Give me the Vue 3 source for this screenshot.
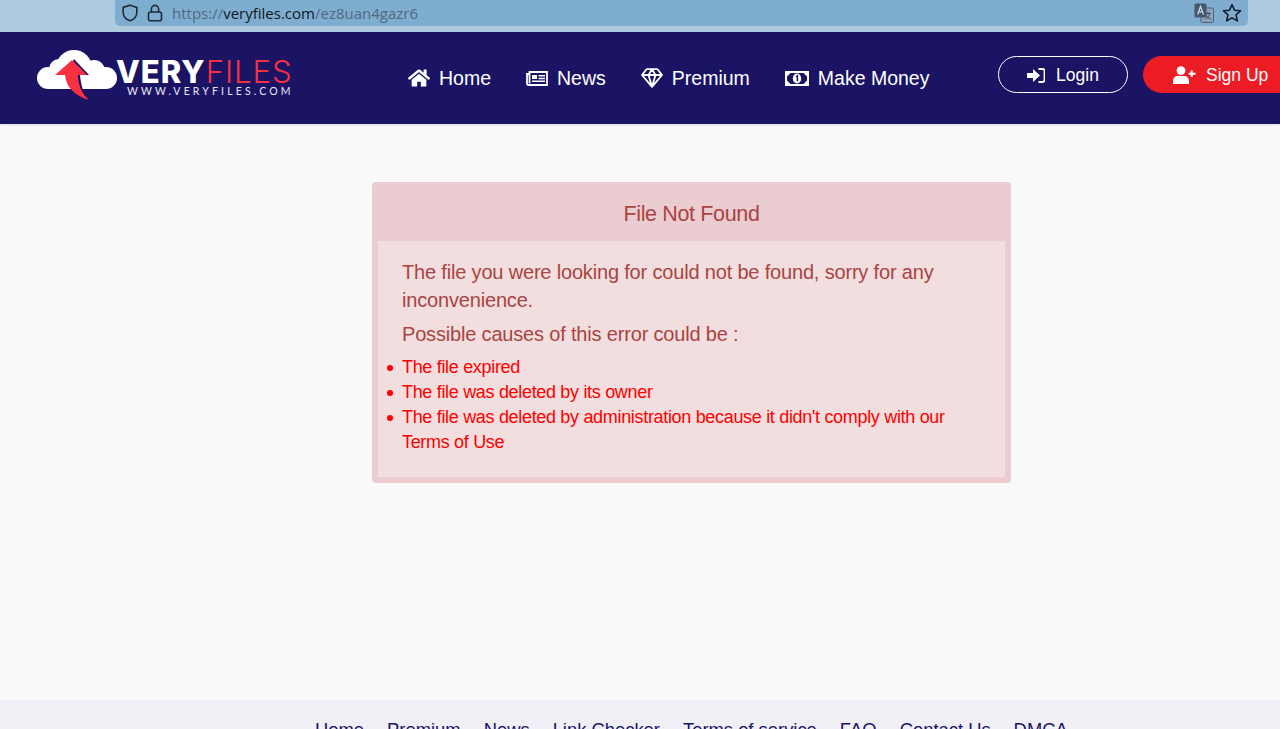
<script setup>
const causes = [
  'The file expired',
  'The file was deleted by its owner',
  "The file was deleted by administration because it didn't comply with our Terms of Use",
]
const footerLinks = ['Home', 'Premium', 'News', 'Link Checker', 'Terms of service', 'FAQ', 'Contact Us', 'DMCA']
</script>

<template>
  <div class="page">
    <div class="browser">
      <div class="urlbar">
        <svg class="shield" viewBox="0 0 16 18" width="16" height="18" fill="none" stroke="#1d2a38" stroke-width="1.6">
          <path d="M8 1.2 14.8 3.4V8.5C14.8 12.6 12 15.4 8 16.8 4 15.4 1.2 12.6 1.2 8.5V3.4Z" />
        </svg>
        <svg class="lock" viewBox="0 0 16 18" width="16" height="18" fill="none" stroke="#1d2a38" stroke-width="1.6">
          <path d="M4.4 8V5a3.6 3.6 0 0 1 7.2 0v3" />
          <rect x="1.5" y="8" width="13" height="8.8" rx="2" />
        </svg>
        <div class="url"><span class="dim">https://</span>veryfiles.com<span class="dim">/ez8uan4gazr6</span></div>
        <svg class="translate" viewBox="0 0 20 20" width="20" height="20">
          <rect x="7" y="5" width="12.5" height="14.5" rx="1.5" fill="#8ba3b8" stroke="#4d6275" />
          <rect x="0.5" y="0.5" width="12" height="14" rx="1.5" fill="#46586b" />
          <path d="M3.6 11.5 6.5 3.5 9.4 11.5M4.7 8.8H8.3" fill="none" stroke="#c8d8e6" stroke-width="1.3" />
          <path d="M11 10.5H17M14 9V10.5M15.8 10.5C15.2 13 13.6 15 11.5 16M12.5 12.5C13.4 14.2 15 15.6 17 16.2" fill="none" stroke="#3c4d5e" stroke-width="1" />
        </svg>
        <svg class="star" viewBox="0 0 20 20" width="20" height="20" fill="none" stroke="#10181f" stroke-width="1.5" stroke-linejoin="round">
          <path d="M10 1.6 12.5 7.2 18.6 7.8 14 11.9 15.4 17.9 10 14.8 4.6 17.9 6 11.9 1.4 7.8 7.5 7.2Z" />
        </svg>
      </div>
    </div>

    <header class="header">
      <div class="logo">
        <svg class="logo-mark" viewBox="0 0 84 52" width="84" height="52">
          <g fill="#fff">
            <circle cx="12" cy="28" r="11" />
            <circle cx="23" cy="19" r="10" />
            <circle cx="38" cy="18" r="18" />
            <circle cx="58" cy="21" r="11" />
            <circle cx="70" cy="28" r="11" />
            <rect x="12" y="24" width="58" height="15" />
          </g>
          <path d="M38 9 53 25H44C45 35 47 44 54 50 41 46 33 37 32 25Z" fill="#1a1464" />
          <path d="M36 10 51 25H42C42 35 46 44 53 50 39 46 30 37 29 25H19Z" fill="#f9303f" />
        </svg>
        <div class="logo-text">
          <div class="logo-name"><b>VERY</b><span>FILES</span></div>
          <div class="logo-site">WWW.VERYFILES.COM</div>
        </div>
      </div>

      <nav class="nav">
        <a class="nav-item">
          <svg viewBox="0 0 576 512" width="22" height="20" fill="#fff">
            <path d="M280.37 148.26L96 300.11V464a16 16 0 0 0 16 16l112.06-.29a16 16 0 0 0 15.92-16V368a16 16 0 0 1 16-16h64a16 16 0 0 1 16 16v95.64a16 16 0 0 0 16 16.05L464 480a16 16 0 0 0 16-16V300L295.67 148.26a12.19 12.19 0 0 0-15.3 0zM571.6 251.47L488 182.56V44.05a12 12 0 0 0-12-12h-56a12 12 0 0 0-12 12v72.61L318.47 43a48 48 0 0 0-61 0L4.34 251.47a12 12 0 0 0-1.6 16.9l25.5 31A12 12 0 0 0 45.15 301l235.22-193.74a12.19 12.19 0 0 1 15.3 0L530.9 301a12 12 0 0 0 16.9-1.6l25.5-31a12 12 0 0 0-1.7-16.93z" />
          </svg>
          Home
        </a>
        <a class="nav-item">
          <svg viewBox="0 0 22 15" width="22" height="15">
            <path d="M3.5 1H21V14H2.5A1.5 1.5 0 0 1 1 12.5V3H3.5ZM3.5 3V12.5" fill="none" stroke="#fff" stroke-width="1.8" />
            <path d="M6 4h5v4H6zM12.5 4H19v1.5h-6.5zM12.5 6.7H19v1.5h-6.5zM6 9.6H19v1.5H6z" fill="#fff" />
          </svg>
          News
        </a>
        <a class="nav-item">
          <svg viewBox="0 0 22 20" width="22" height="20" fill="none" stroke="#fff" stroke-width="1.8" stroke-linejoin="round">
            <path d="M5.5 1.2H16.5L21 7 11 18.8 1 7ZM1 7H21M7.5 7 11 18.8 14.5 7 11 1.2 7.5 7" />
          </svg>
          Premium
        </a>
        <a class="nav-item">
          <svg viewBox="0 0 24 15" width="24" height="15">
            <rect x="1" y="1" width="22" height="13" fill="#1a1464" stroke="#fff" stroke-width="2" />
            <path d="M2 2H5.5L2 5.5ZM22 2H18.5L22 5.5ZM2 13H5.5L2 9.5ZM22 13H18.5L22 9.5Z" fill="#fff" />
            <ellipse cx="12" cy="7.5" rx="4.2" ry="5" fill="#fff" />
            <path d="M11 5.6 12.4 4.8V10.2" fill="none" stroke="#1a1464" stroke-width="1.5" />
          </svg>
          Make Money
        </a>
      </nav>

      <div class="auth">
        <a class="btn btn-login">
          <svg viewBox="0 0 18 15" width="18" height="15" fill="#fff">
            <path d="M0 5H6V1L13 7.5 6 14V10H0Z" />
            <path d="M11.5 1H15.5A2 2 0 0 1 17.5 3V12A2 2 0 0 1 15.5 14H11.5" fill="none" stroke="#fff" stroke-width="1.8" />
          </svg>
          Login
        </a>
        <a class="btn btn-signup">
          <svg viewBox="0 0 23 18" width="23" height="18" fill="#fff">
            <circle cx="8" cy="4.6" r="4.4" />
            <path d="M0 18V15C0 12 2 10 5 10H11C14 10 16 12 16 15V18Z" />
            <path d="M18.7 4.5V11M15.5 7.7H22.5" fill="none" stroke="#fff" stroke-width="2" />
          </svg>
          Sign Up
        </a>
      </div>
    </header>

    <main class="content">
      <section class="card">
        <h1 class="card-title">File Not Found</h1>
        <div class="card-body">
          <p>The file you were looking for could not be found, sorry for any inconvenience.</p>
          <p class="causes-intro">Possible causes of this error could be :</p>
          <ul class="causes">
            <li v-for="cause in causes" :key="cause">{{ cause }}</li>
          </ul>
        </div>
      </section>
    </main>

    <footer class="footer">
      <a v-for="link in footerLinks" :key="link">{{ link }}</a>
    </footer>
  </div>
</template>

<style>
html, body {
  height: 729px;
  overflow: hidden;
}
</style>

<style scoped>
.page {
  height: 729px;
  overflow: hidden;
  display: flex;
  flex-direction: column;
  font-family: "Liberation Sans", Arial, sans-serif;
  background: #f9f9f9;
}

.browser {
  height: 32px;
  flex: none;
  padding-left: 115px;
  padding-right: 32px;
  background: #aecbe0;
}
.urlbar {
  height: 26px;
  display: flex;
  align-items: center;
  background: #7fadd0;
  border-radius: 0 0 5px 5px;
  padding: 0 6px 0 7px;
}
.lock {
  margin-left: 9px;
}
.url {
  margin-left: 9px;
  flex: 1;
  font-family: "Open Sans", sans-serif;
  font-size: 15px;
  color: #10181f;
}
.dim {
  color: #4f6a80;
}
.star {
  margin-left: 8px;
}

.header {
  height: 92px;
  flex: none;
  display: flex;
  align-items: center;
  background: #1b1464;
  box-shadow: 0 1px 2px rgba(0, 0, 0, 0.12);
  padding-left: 36px;
  overflow: hidden;
  position: relative;
}
.logo {
  width: 372px;
  flex: none;
  display: flex;
  align-items: flex-start;
  height: 52px;
  margin-bottom: 4px;
}
.logo-text {
  margin-left: -4px;
  margin-top: 8px;
  font-family: Inter, sans-serif;
}
.logo-name {
  font-size: 31px;
  line-height: 28px;
  color: #fff;
  letter-spacing: 1px;
  white-space: nowrap;
}
.logo-name b {
  font-weight: 800;
}
.logo-name span {
  font-weight: 300;
  color: #f9303f;
}
.logo-site {
  margin-left: 11px;
  font-family: Lato, sans-serif;
  font-size: 10.5px;
  line-height: 10px;
  letter-spacing: 3.15px;
  color: #e8e8f2;
  white-space: nowrap;
}

.nav {
  display: flex;
  gap: 35px;
  width: 590px;
  flex: none;
}
.nav-item {
  display: flex;
  align-items: center;
  gap: 9px;
  color: #fff;
  font-size: 19.5px;
  white-space: nowrap;
}

.auth {
  display: flex;
  gap: 15px;
  flex: none;
  margin-bottom: 8px;
}
.btn {
  height: 37px;
  box-sizing: border-box;
  display: flex;
  align-items: center;
  border-radius: 19px;
  color: #fff;
  font-size: 17.5px;
  white-space: nowrap;
  padding-top: 2px;
}
.btn-login {
  width: 130px;
  border: 1px solid #fff;
  justify-content: center;
  gap: 11px;
}
.btn-signup {
  width: 170px;
  background: #ed1c24;
  padding-left: 30px;
  gap: 10px;
}

.content {
  flex: 1;
  min-height: 0;
  padding-top: 58px;
}
.card {
  width: 639px;
  height: 301px;
  box-sizing: border-box;
  margin-left: 372px;
  background: #ebccd1;
  border-radius: 4px;
  padding: 0 6px 6px;
  display: flex;
  flex-direction: column;
  color: #a94442;
}
.card-title {
  margin: 0;
  height: 59px;
  box-sizing: border-box;
  padding-top: 6px;
  flex: none;
  display: flex;
  align-items: center;
  justify-content: center;
  font-size: 21.5px;
  letter-spacing: -0.35px;
  font-weight: 400;
}
.card-body {
  flex: 1;
  background: #f2dede;
  padding: 17px 24px 0;
  font-size: 20px;
  letter-spacing: -0.175px;
  line-height: 28px;
}
.card-body p {
  margin: 0 0 6px;
}
.causes {
  margin: 0;
  padding: 0;
  list-style: none;
  color: #f00;
  font-size: 18px;
  letter-spacing: -0.32px;
  line-height: 25px;
}
.causes li {
  position: relative;
}
.causes li::before {
  content: "";
  position: absolute;
  left: -15px;
  top: 10px;
  width: 6px;
  height: 6px;
  border-radius: 50%;
  background: #f00;
}
.causes-intro {
  margin-bottom: 7px !important;
}

.footer {
  height: 29px;
  flex: none;
  box-sizing: border-box;
  display: flex;
  gap: 23px;
  padding: 19px 0 0 315px;
  background: #efeff5;
  color: #1a1464;
  font-size: 18.4px;
  white-space: nowrap;
  overflow: hidden;
}
</style>
